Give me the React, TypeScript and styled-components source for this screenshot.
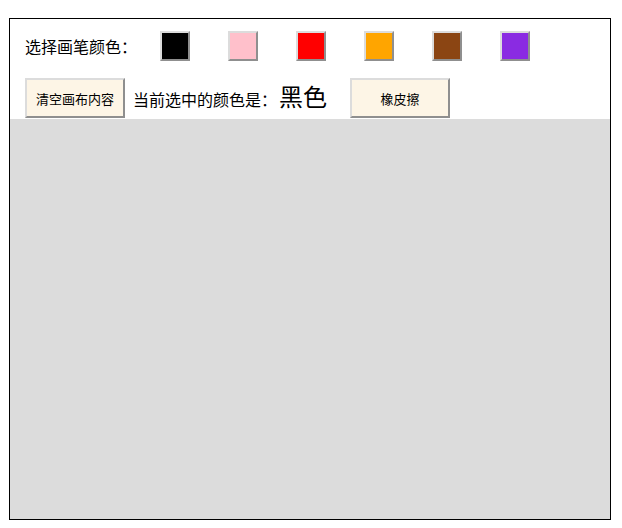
import React, { useState } from "react";
import styled, { createGlobalStyle } from "styled-components";

const Global = createGlobalStyle`
  html, body { margin: 0; padding: 0; background: #fff; }
  body { font-family: "Noto Sans CJK SC", "Noto Sans", sans-serif; color: #000; }
`;

const Page = styled.div`
  padding: 18px 0 0 9px;
`;

const Board = styled.div`
  width: 600px;
  border: 1px solid #000;
  display: flex;
  flex-direction: column;
`;

const Header = styled.div`
  height: 100px;
  box-sizing: border-box;
  padding: 12px 0 0 15px;
  display: flex;
  flex-direction: column;
`;

const Row = styled.div<{ $top?: number }>`
  display: flex;
  align-items: center;
  margin-top: ${(p) => p.$top ?? 0}px;
`;

const Label = styled.span<{ $width?: number }>`
  font-size: 16px;
  line-height: 20px;
  white-space: nowrap;
  ${(p) => (p.$width ? `width: ${p.$width}px;` : "")}
`;

const Swatches = styled.div`
  display: flex;
  gap: 38px;
`;

const Swatch = styled.button<{ $color: string }>`
  width: 30px;
  height: 30px;
  padding: 0;
  box-sizing: border-box;
  background: ${(p) => p.$color};
  border: 2px solid;
  border-color: #dcdcdc #8f8f8f #8f8f8f #dcdcdc;
  cursor: pointer;
`;

const ActionButton = styled.button`
  width: 100px;
  height: 40px;
  box-sizing: border-box;
  background: #fdf5e6;
  border: 2px solid;
  border-color: #dcdcdc #8f8f8f #8f8f8f #dcdcdc;
  font-family: "Noto Sans CJK SC", sans-serif;
  font-size: 13px;
  color: #000;
  padding: 0;
  cursor: pointer;
`;

const Current = styled.div`
  display: flex;
  align-items: baseline;
  margin: 0 23px 4px 8px;
`;

const ColorName = styled.span`
  font-size: 24px;
  line-height: 26px;
  margin-left: 2px;
  width: 48px;
`;

const Canvas = styled.div`
  height: 400px;
  background: #dcdcdc;
`;

const colors = [
  { value: "#000000", name: "黑色" },
  { value: "#ffc0cb", name: "粉色" },
  { value: "#ff0000", name: "红色" },
  { value: "#ffa500", name: "橙色" },
  { value: "#8b4513", name: "棕色" },
  { value: "#8a2be2", name: "紫色" },
];

export default function App() {
  const [current, setCurrent] = useState("黑色");
  return (
    <Page>
      <Global />
      <Board>
        <Header>
          <Row>
            <Label $width={135}>选择画笔颜色：</Label>
            <Swatches>
              {colors.map((c) => (
                <Swatch key={c.value} $color={c.value} onClick={() => setCurrent(c.name)} />
              ))}
            </Swatches>
          </Row>
          <Row $top={17}>
            <ActionButton>清空画布内容</ActionButton>
            <Current>
              <Label>当前选中的颜色是：</Label>
              <ColorName>{current}</ColorName>
            </Current>
            <ActionButton onClick={() => setCurrent("橡皮擦")}>橡皮擦</ActionButton>
          </Row>
        </Header>
        <Canvas />
      </Board>
    </Page>
  );
}
